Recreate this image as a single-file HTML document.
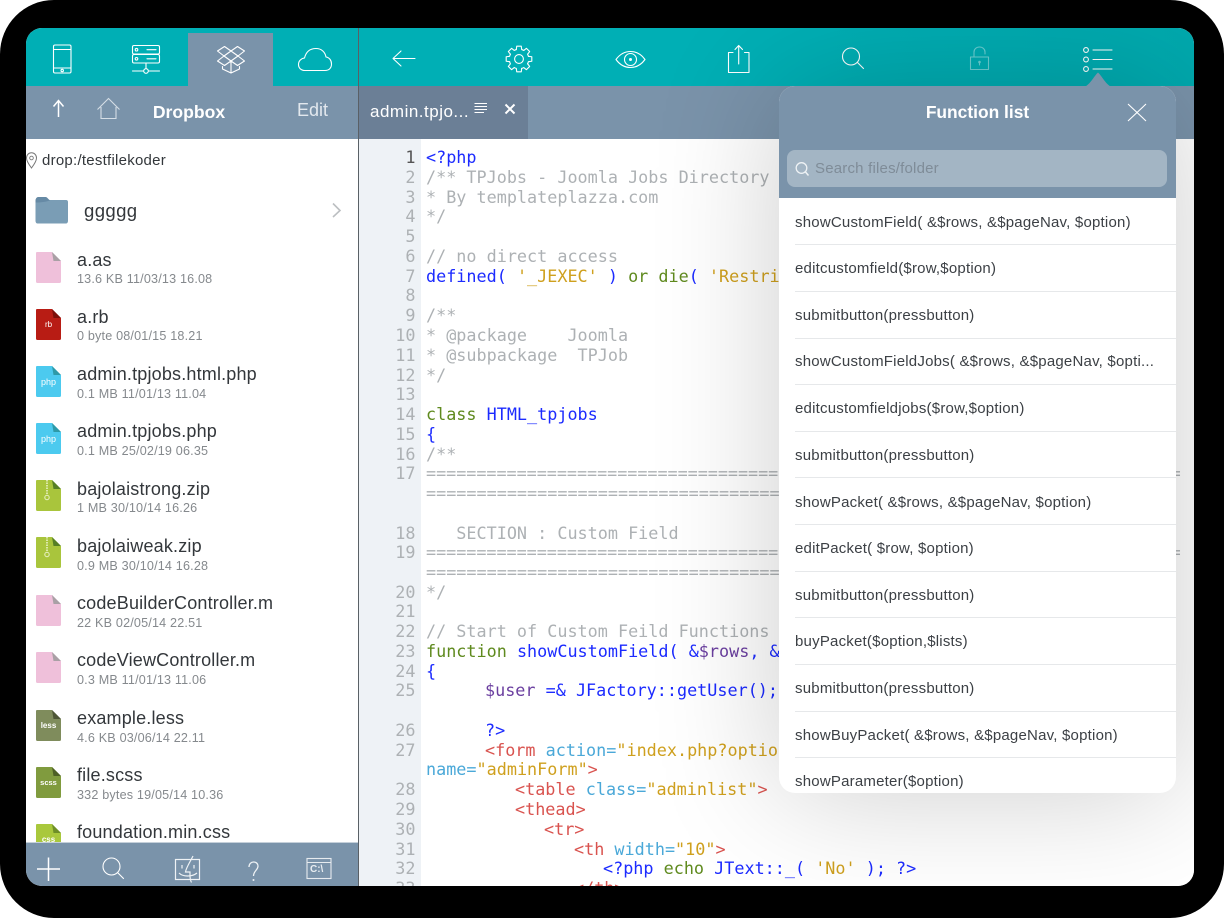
<!DOCTYPE html>
<html><head><meta charset="utf-8"><title>Koder</title>
<style>
html,body{margin:0;padding:0;width:1224px;height:918px;overflow:hidden;background:#fff}
*{box-sizing:border-box}
#frame{position:absolute;left:0;top:0;width:1224px;height:918px;background:#000;border-radius:54px}
#screen{position:absolute;left:26px;top:28px;width:1168px;height:858px;overflow:hidden;border-radius:16px;background:#fff}
#v{position:absolute;left:-26px;top:-28px;width:1224px;height:918px;font-family:"Liberation Sans",sans-serif;filter:blur(.3px)}
.a{position:absolute}
.t{position:absolute;white-space:pre;line-height:20px}
svg{position:absolute;left:0;top:0;overflow:visible}
.s{fill:none;stroke:#fff;stroke-width:1.1;stroke-linejoin:round;stroke-linecap:round}
.n{position:absolute;left:77px;color:#33373b;font-size:18px;letter-spacing:.18px;line-height:22px;white-space:pre}
.m{position:absolute;left:77px;color:#85898d;font-size:12.6px;letter-spacing:.18px;line-height:16px;white-space:pre}
.ic{position:absolute;left:36px;width:25px;height:31px;color:#fff;font-size:9px;text-align:center;line-height:31px}
.ic span{position:absolute;left:0;right:0;top:0;line-height:31px}
.l{position:absolute;font:16.8px/20px "DejaVu Sans Mono",monospace;white-space:pre;color:#adb1b4}
.g{position:absolute;left:380px;width:35.5px;text-align:right;font:16.8px/20px "DejaVu Sans Mono",monospace;color:#adb1b4}
.b{color:#1c2bff}.o{color:#5f8a1e}.y{color:#cfa01e}.p{color:#6b3fa0}.r{color:#d9534f}.h{color:#4aa8d8}.d{color:#adb1b4}
.f{position:absolute;left:795px;color:#3c4045;font-size:15px;letter-spacing:.21px;line-height:20px;white-space:pre}
.sep{position:absolute;left:795px;width:381px;height:1px;background:#e6e8ea}
</style></head><body>
<div id="frame"></div>
<div id="screen"><div id="v">

<!-- editor -->
<div class="a" style="left:359px;top:139px;width:835px;height:747px;background:#fff"></div>
<div class="a" style="left:359px;top:139px;width:62px;height:747px;background:#eef2f6"></div>

<div class="g" style="top:147px;color:#555">1</div><div class="l" style="left:426px;top:147px"><span class="b">&lt;?php</span></div>
<div class="g" style="top:167px">2</div><div class="l" style="left:426px;top:167px">/** TPJobs - Joomla Jobs Directory</div>
<div class="g" style="top:187px">3</div><div class="l" style="left:426px;top:187px">* By templateplazza.com</div>
<div class="g" style="top:206px">4</div><div class="l" style="left:426px;top:206px">*/</div>
<div class="g" style="top:226px">5</div>
<div class="g" style="top:246px">6</div><div class="l" style="left:426px;top:246px">// no direct access</div>
<div class="g" style="top:266px">7</div><div class="l" style="left:426px;top:266px"><span class="b">defined( </span><span class="y">'_JEXEC'</span><span class="b"> ) </span><span class="o">or die</span><span class="b">( </span><span class="y">'Restricted access'</span><span class="b"> );</span></div>
<div class="g" style="top:285px">8</div>
<div class="g" style="top:305px">9</div><div class="l" style="left:426px;top:305px">/**</div>
<div class="g" style="top:325px">10</div><div class="l" style="left:426px;top:325px">* @package    Joomla</div>
<div class="g" style="top:345px">11</div><div class="l" style="left:426px;top:345px">* @subpackage  TPJob</div>
<div class="g" style="top:365px">12</div><div class="l" style="left:426px;top:365px">*/</div>
<div class="g" style="top:384px">13</div>
<div class="g" style="top:404px">14</div><div class="l" style="left:426px;top:404px"><span class="o">class </span><span class="b">HTML_tpjobs</span></div>
<div class="g" style="top:424px">15</div><div class="l" style="left:426px;top:424px"><span class="b">{</span></div>
<div class="g" style="top:444px">16</div><div class="l" style="left:426px;top:444px">/**</div>
<div class="g" style="top:463px">17</div><div class="l" style="left:426px;top:463px;letter-spacing:-.04px">===========================================================================</div>
<div class="l" style="left:426px;top:483px">=====================================</div>
<div class="g" style="top:523px">18</div><div class="l" style="left:426px;top:523px">   SECTION : Custom Field</div>
<div class="g" style="top:542px">19</div><div class="l" style="left:426px;top:542px;letter-spacing:-.04px">===========================================================================</div>
<div class="l" style="left:426px;top:562px">=====================================</div>
<div class="g" style="top:582px">20</div><div class="l" style="left:426px;top:582px">*/</div>
<div class="g" style="top:601px">21</div>
<div class="g" style="top:621px">22</div><div class="l" style="left:426px;top:621px">// Start of Custom Feild Functions</div>
<div class="g" style="top:641px">23</div><div class="l" style="left:426px;top:641px"><span class="o">function </span><span class="b">showCustomField( &amp;</span><span class="p">$rows</span><span class="b">, &amp;</span><span class="p">$pageNav</span></div>
<div class="g" style="top:661px">24</div><div class="l" style="left:426px;top:661px"><span class="b">{</span></div>
<div class="g" style="top:680px">25</div><div class="l" style="left:485px;top:680px"><span class="p">$user</span><span class="b"> =&amp; JFactory::getUser();</span></div>
<div class="g" style="top:720px">26</div><div class="l" style="left:485px;top:720px"><span class="b">?&gt;</span></div>
<div class="g" style="top:740px">27</div><div class="l" style="left:485px;top:740px"><span class="r">&lt;form </span><span class="h">action=</span><span class="y">"index.php?option=com_tpjobs"</span></div>
<div class="l" style="left:426px;top:759px"><span class="h">name=</span><span class="y">"adminForm"</span><span class="r">&gt;</span></div>
<div class="g" style="top:779px">28</div><div class="l" style="left:515px;top:779px"><span class="r">&lt;table </span><span class="h">class=</span><span class="y">"adminlist"</span><span class="r">&gt;</span></div>
<div class="g" style="top:799px">29</div><div class="l" style="left:515px;top:799px"><span class="r">&lt;thead&gt;</span></div>
<div class="g" style="top:819px">30</div><div class="l" style="left:544px;top:819px"><span class="r">&lt;tr&gt;</span></div>
<div class="g" style="top:839px">31</div><div class="l" style="left:574px;top:839px"><span class="r">&lt;th </span><span class="h">width=</span><span class="y">"10"</span><span class="r">&gt;</span></div>
<div class="g" style="top:858px">32</div><div class="l" style="left:603px;top:858px"><span class="b">&lt;?php </span><span class="o">echo </span><span class="b">JText::_( </span><span class="y">'No'</span><span class="b"> ); ?&gt;</span></div>
<div class="g" style="top:878px">33</div><div class="l" style="left:574px;top:878px"><span class="r">&lt;/th&gt;</span></div>

<!-- editor top -->
<div class="a" style="left:359px;top:28px;width:835px;height:58px;background:linear-gradient(90deg,#00afb5 55%,#00a9ae 100%)"></div>
<div class="a" style="left:359px;top:86px;width:835px;height:53px;background:#7a93aa"></div>
<div class="a" style="left:359px;top:86px;width:169px;height:53px;background:#6b7f96"></div>
<div class="t" style="left:370px;top:102px;color:#fff;font-size:17px;letter-spacing:.5px">admin.tpjo...</div>
<svg width="1224" height="918"><path d="M474.500 103.500H487M474.500 106.500H487M474.500 109.500H487M474.500 112.500H484" stroke="#fff" stroke-width="1" fill="none"/><path d="M505.500 104.500L514.500 113.500M514.500 104.500L505.500 113.500" stroke="#fff" stroke-width="2" fill="none"/></svg>

<!-- toolbar icons -->
<svg width="1224" height="918">
<path class="s" d="M415 58.500H393M401 51L393 58.500L401 66"/>
<g class="s" transform="translate(519 59)">
<circle r="4.400"/>
<path d="M-2.700-9.420L-2.260-12.800H2.260L2.700-9.420A9.800 9.800 0 0 1 4.750-8.570"/>
<path transform="rotate(45)" d="M-2.700-9.420L-2.260-12.800H2.260L2.700-9.420A9.800 9.800 0 0 1 4.750-8.570"/>
<path transform="rotate(90)" d="M-2.700-9.420L-2.260-12.800H2.260L2.700-9.420A9.800 9.800 0 0 1 4.750-8.570"/>
<path transform="rotate(135)" d="M-2.700-9.420L-2.260-12.800H2.260L2.700-9.420A9.800 9.800 0 0 1 4.750-8.570"/>
<path transform="rotate(180)" d="M-2.700-9.420L-2.260-12.800H2.260L2.700-9.420A9.800 9.800 0 0 1 4.750-8.570"/>
<path transform="rotate(225)" d="M-2.700-9.420L-2.260-12.800H2.260L2.700-9.420A9.800 9.800 0 0 1 4.750-8.570"/>
<path transform="rotate(270)" d="M-2.700-9.420L-2.260-12.800H2.260L2.700-9.420A9.800 9.800 0 0 1 4.750-8.570"/>
<path transform="rotate(315)" d="M-2.700-9.420L-2.260-12.800H2.260L2.700-9.420A9.800 9.800 0 0 1 4.750-8.570"/>
</g>
<path class="s" d="M616 59.500C620 54 625 51.500 630.500 51.500C636 51.500 641 54 645 59.500C641 65 636 67.500 630.500 67.500C625 67.500 620 65 616 59.500Z"/>
<circle class="s" cx="630.500" cy="59.500" r="6"/><circle cx="630.500" cy="59.500" r="1.500" fill="#fff"/>
<path class="s" d="M733 52.500H728.500V72.500H749V52.500H744.500M738.700 64V46M735 49.500L738.700 45.500L742.500 49.500"/>
<circle class="s" cx="851" cy="56.500" r="8.500"/><path class="s" stroke-width="1.500" d="M857.500 62.500L863.500 68.500"/>
<g style="opacity:.42"><path class="s" d="M970.500 57H988.500V69.500H970.500ZM974 57V52C974 49 976.500 47 979.500 47C982.500 47 985 49 985 52V54"/><circle cx="979.500" cy="62" r="1.300" fill="#fff"/><path class="s" d="M979.500 62V65"/></g>
<circle class="s" stroke-width="1.500" cx="1086" cy="50" r="2.400"/><circle class="s" stroke-width="1.500" cx="1086" cy="59.500" r="2.400"/><circle class="s" stroke-width="1.500" cx="1086" cy="69" r="2.400"/>
<path class="s" d="M1093 50H1112M1093 59.500H1112M1093 69H1112"/>
</svg>

<!-- popover -->
<svg width="1224" height="918" style="z-index:2"><path d="M1084 87C1090 85 1094 76 1098 72.500C1102 76 1106 85 1112 87Z" fill="#7a93aa"/></svg>
<div class="a" style="left:779px;top:86px;width:397px;height:707px;background:#fff;border-radius:16px;overflow:hidden;box-shadow:0 0 180px rgba(0,0,0,.2);z-index:1">
 <div class="a" style="left:0;top:0;width:397px;height:112px;background:#7a93aa"></div>
 <div class="a" style="left:8px;top:64px;width:380px;height:37px;background:#a3b5c4;border-radius:8px"></div>
 <div class="t" style="left:0;top:16px;width:397px;text-align:center;color:#fff;font-size:17.4px;font-weight:bold">Function list</div>
 <div class="t" style="left:36px;top:73px;color:#7f8c98;font-size:15px;letter-spacing:.2px">Search files/folder</div>
</div>
<div class="a" style="left:0;top:0;width:1224px;height:793px;overflow:hidden;z-index:3">
<svg width="1224" height="918">
<path d="M1128 104L1146 121M1146 104L1128 121" stroke="#fff" stroke-width="1.100" fill="none"/>
<circle cx="801.500" cy="168" r="5.300" fill="none" stroke="#eef2f5" stroke-width="1.300"/><path d="M805.500 172L808.500 175.500" stroke="#eef2f5" stroke-width="1.500"/>
</svg>
<div class="f" style="top:213px">showCustomField( &amp;$rows, &amp;$pageNav, $option)</div><div class="sep" style="top:244px"></div>
<div class="f" style="top:259px">editcustomfield($row,$option)</div><div class="sep" style="top:291px"></div>
<div class="f" style="top:306px">submitbutton(pressbutton)</div><div class="sep" style="top:338px"></div>
<div class="f" style="top:352px">showCustomFieldJobs( &amp;$rows, &amp;$pageNav, $opti...</div><div class="sep" style="top:384px"></div>
<div class="f" style="top:399px">editcustomfieldjobs($row,$option)</div><div class="sep" style="top:431px"></div>
<div class="f" style="top:446px">submitbutton(pressbutton)</div><div class="sep" style="top:477px"></div>
<div class="f" style="top:493px">showPacket( &amp;$rows, &amp;$pageNav, $option)</div><div class="sep" style="top:524px"></div>
<div class="f" style="top:539px">editPacket( $row, $option)</div><div class="sep" style="top:571px"></div>
<div class="f" style="top:586px">submitbutton(pressbutton)</div><div class="sep" style="top:617px"></div>
<div class="f" style="top:632px">buyPacket($option,$lists)</div><div class="sep" style="top:664px"></div>
<div class="f" style="top:679px">submitbutton(pressbutton)</div><div class="sep" style="top:711px"></div>
<div class="f" style="top:726px">showBuyPacket( &amp;$rows, &amp;$pageNav, $option)</div><div class="sep" style="top:757px"></div>
<div class="f" style="top:772px">showParameter($option)</div>
</div>

<!-- sidebar -->
<div class="a" style="left:26px;top:28px;width:332px;height:858px;background:#fff;z-index:4"></div>
<div class="a" style="left:358px;top:28px;width:1px;height:858px;background:#5a6066;z-index:4"></div>
<div class="a" style="left:26px;top:28px;width:332px;height:58px;background:#00afb5;z-index:4"></div>
<div class="a" style="left:188px;top:33px;width:85px;height:53px;background:#7a93aa;z-index:4"></div>
<div class="a" style="left:26px;top:86px;width:332px;height:53px;background:#7a93aa;z-index:4"></div>
<div id="side" class="a" style="left:0;top:0;width:358px;height:918px;z-index:5">
<svg width="358" height="918">
<rect class="s" x="53.500" y="45" width="17.500" height="28" rx="1.500"/><path class="s" d="M53.500 49.500H71M53.500 68H71"/><circle class="s" stroke-width=".9" cx="62.200" cy="70.500" r="1.200"/>
<rect class="s" x="132.500" y="45.500" width="27" height="8.500" rx="1.500"/><rect class="s" x="132.500" y="54.500" width="27" height="8.500" rx="1.500"/>
<circle class="s" cx="136.500" cy="49.700" r="1.300"/><circle class="s" cx="136.500" cy="58.800" r="1.300"/><path class="s" stroke-width="1" d="M147 49.700H156M147 58.800H156"/>
<path class="s" d="M146 63V68.500M132.500 71H143.500M148.500 71H159.500"/><circle class="s" cx="146" cy="71" r="2.300"/>
<path class="s" d="M231 51L224.500 46.500L217.500 51L224 56L217.500 61L224.500 65.500L231 61L237.500 65.500L244.500 61L238 56L244.500 51L237.500 46.500ZM224 56L231 51L238 56L231 61ZM222.500 66.500V69L231 73L239.500 69V66.500M231 61V73"/>
<path class="s" d="M305 70.500C301 70.500 298.500 68 298.500 64.500C298.500 61 301 58.500 304.500 58C306 52 310 48.500 316 48.500C321.500 48.500 325 52 326 57C329.500 57.500 331.500 60.500 331.500 64C331.500 68 329 70.500 325 70.500Z"/>
<path d="M58.500 117V101M53.500 106.500L58.500 100.500L63.500 106.500" fill="none" stroke="#fff" stroke-width="1.500"/>
<path d="M97.500 109.500L108.500 98.500L119.500 109.500M101 107V118.500H116V107" fill="none" stroke="#d5dee6" stroke-width="1.100"/>
<path d="M31.500 168C28.500 164 26.500 161 26.500 158C26.500 155 28.700 152.800 31.500 152.800C34.300 152.800 36.500 155 36.500 158C36.500 161 34.500 164 31.500 168Z" fill="none" stroke="#777" stroke-width="1"/><circle cx="31.500" cy="158" r="1.800" fill="none" stroke="#777" stroke-width=".9"/>
<path d="M35.500 201C35.500 199 36.500 197 38.500 197H45.500C47 197 48 199 49.500 200H66C67.500 200 68 201 68 202V221C68 222.500 67 223.500 66 223.500H37.500C36.500 223.500 35.500 222.500 35.500 221Z" fill="#7a9db5"/>
<path d="M35.500 201C35.500 199 36.500 197 38.500 197H45.500C47 197 48 199 50 200.500C47 201.500 42 202.500 35.500 202.500Z" fill="#668aa5"/>
<path d="M333 203.500L340 210.500L333 217" fill="none" stroke="#bcbfc2" stroke-width="1.600"/>
</svg>
<div class="t" style="left:0;top:102px;width:378px;text-align:center;color:#fff;font-size:17.6px;font-weight:bold">Dropbox</div>
<div class="t" style="left:297px;top:100px;color:#e2e8ee;font-size:18px">Edit</div>
<div class="t" style="left:42px;top:150.500px;color:#33373b;font-size:15px;letter-spacing:.25px">drop:/testfilekoder</div>
<div class="t" style="left:84px;top:201px;color:#33373b;font-size:18.600px;letter-spacing:.35px">ggggg</div>

<div class="n" style="top:249px">a.as</div><div class="m" style="top:271px">13.6 KB 11/03/13 16.08</div>
<div class="n" style="top:306px">a.rb</div><div class="m" style="top:328px">0 byte 08/01/15 18.21</div>
<div class="n" style="top:363px">admin.tpjobs.html.php</div><div class="m" style="top:386px">0.1 MB 11/01/13 11.04</div>
<div class="n" style="top:420px">admin.tpjobs.php</div><div class="m" style="top:443px">0.1 MB 25/02/19 06.35</div>
<div class="n" style="top:478px">bajolaistrong.zip</div><div class="m" style="top:500px">1 MB 30/10/14 16.26</div>
<div class="n" style="top:535px">bajolaiweak.zip</div><div class="m" style="top:558px">0.9 MB 30/10/14 16.28</div>
<div class="n" style="top:592px">codeBuilderController.m</div><div class="m" style="top:615px">22 KB 02/05/14 22.51</div>
<div class="n" style="top:649px">codeViewController.m</div><div class="m" style="top:672px">0.3 MB 11/01/13 11.06</div>
<div class="n" style="top:707px">example.less</div><div class="m" style="top:730px">4.6 KB 03/06/14 22.11</div>
<div class="n" style="top:764px">file.scss</div><div class="m" style="top:787px">332 bytes 19/05/14 10.36</div>
<div class="n" style="top:821px">foundation.min.css</div>

<svg width="358" height="918">
<g transform="translate(36 252)"><path d="M1 0H16L25 9V29.500a1.500 1.500 0 0 1-1.500 1.500H1.500a1.500 1.500 0 0 1-1.500-1.500V1a1 1 0 0 1 1-1Z" fill="#efc0da"/><path d="M16 0L25 9H17.500Z" fill="#a9a0a5"/></g>
<g transform="translate(36 309)"><path d="M1 0H16L25 9V29.500a1.500 1.500 0 0 1-1.500 1.500H1.500a1.500 1.500 0 0 1-1.500-1.500V1a1 1 0 0 1 1-1Z" fill="#b81c14"/><path d="M16 0L25 9H17.500Z" fill="#7c0f0a"/></g>
<g transform="translate(36 366)"><path d="M1 0H16L25 9V29.500a1.500 1.500 0 0 1-1.500 1.500H1.500a1.500 1.500 0 0 1-1.500-1.500V1a1 1 0 0 1 1-1Z" fill="#4ccaef"/><path d="M16 0L25 9H17.500Z" fill="#2e9aa8"/></g>
<g transform="translate(36 423)"><path d="M1 0H16L25 9V29.500a1.500 1.500 0 0 1-1.500 1.500H1.500a1.500 1.500 0 0 1-1.500-1.500V1a1 1 0 0 1 1-1Z" fill="#4ccaef"/><path d="M16 0L25 9H17.500Z" fill="#2e9aa8"/></g>
<g transform="translate(36 480)"><path d="M1 0H16L25 9V29.500a1.500 1.500 0 0 1-1.500 1.500H1.500a1.500 1.500 0 0 1-1.500-1.500V1a1 1 0 0 1 1-1Z" fill="#a9c53c"/><path d="M16 0L25 9H17.500Z" fill="#567f26"/><path d="M11 0V14" stroke="#e9f1c6" stroke-width="1.600" stroke-dasharray="1.500 1"/><circle cx="11" cy="17.500" r="2.200" fill="none" stroke="#e9f1c6" stroke-width="1"/></g>
<g transform="translate(36 537)"><path d="M1 0H16L25 9V29.500a1.500 1.500 0 0 1-1.500 1.500H1.500a1.500 1.500 0 0 1-1.500-1.500V1a1 1 0 0 1 1-1Z" fill="#a9c53c"/><path d="M16 0L25 9H17.500Z" fill="#567f26"/><path d="M11 0V14" stroke="#e9f1c6" stroke-width="1.600" stroke-dasharray="1.500 1"/><circle cx="11" cy="17.500" r="2.200" fill="none" stroke="#e9f1c6" stroke-width="1"/></g>
<g transform="translate(36 595)"><path d="M1 0H16L25 9V29.500a1.500 1.500 0 0 1-1.500 1.500H1.500a1.500 1.500 0 0 1-1.500-1.500V1a1 1 0 0 1 1-1Z" fill="#efc0da"/><path d="M16 0L25 9H17.500Z" fill="#a9a0a5"/></g>
<g transform="translate(36 652)"><path d="M1 0H16L25 9V29.500a1.500 1.500 0 0 1-1.500 1.500H1.500a1.500 1.500 0 0 1-1.500-1.500V1a1 1 0 0 1 1-1Z" fill="#efc0da"/><path d="M16 0L25 9H17.500Z" fill="#a9a0a5"/></g>
<g transform="translate(36 710)"><path d="M1 0H16L25 9V29.500a1.500 1.500 0 0 1-1.500 1.500H1.500a1.500 1.500 0 0 1-1.500-1.500V1a1 1 0 0 1 1-1Z" fill="#7f8c5c"/><path d="M16 0L25 9H17.500Z" fill="#4d5636"/></g>
<g transform="translate(36 767)"><path d="M1 0H16L25 9V29.500a1.500 1.500 0 0 1-1.500 1.500H1.500a1.500 1.500 0 0 1-1.500-1.500V1a1 1 0 0 1 1-1Z" fill="#809b3e"/><path d="M16 0L25 9H17.500Z" fill="#4d5f25"/></g>
<g transform="translate(36 824)"><path d="M1 0H16L25 9V29.500a1.500 1.500 0 0 1-1.500 1.500H1.500a1.500 1.500 0 0 1-1.500-1.500V1a1 1 0 0 1 1-1Z" fill="#a9c83c"/><path d="M16 0L25 9H17.500Z" fill="#6e8f28"/></g>
</svg>
<div class="ic" style="top:309px;font-size:8px"><span>rb</span></div>
<div class="ic" style="top:367px"><span>php</span></div>
<div class="ic" style="top:424px"><span>php</span></div>
<div class="ic" style="top:710px;font-weight:bold;font-size:8px"><span>less</span></div>
<div class="ic" style="top:767px;font-weight:bold;font-size:7.500px"><span>scss</span></div>
<div class="ic" style="top:824px;font-weight:bold;font-size:8px"><span>css</span></div>

<div class="a" style="left:26px;top:842px;width:332px;height:44px;background:#7a93aa;border-top:1px solid #c5d0da"></div>
<svg width="358" height="918">
<path d="M37 869H60M48.500 857.500V881" stroke="#fff" stroke-width="1.500" fill="none"/>
<circle class="s" cx="111.500" cy="866.500" r="8.500"/><path class="s" stroke-width="1.500" d="M118 873L123.500 878.500"/>
<g stroke="#eef2f5" fill="none" stroke-width="1.200"><rect x="175.500" y="859.500" width="24" height="20"/><path d="M193 856C190 862 186 868 185.500 872H190C190 876 189.500 879 191.500 882.500"/><path d="M182 865V868.500M194 865V868.500M179 873C183 877 192 877 197 873"/></g>
<path d="M249 867C249 863.500 251.500 862 253.500 862C256.500 862 258 864 258 866C258 870 253.500 871 253.500 876" stroke="#eef2f5" stroke-width="1.300" fill="none"/><circle cx="253.500" cy="880" r="1" fill="#eef2f5"/>
<rect x="307" y="858.500" width="24" height="20" fill="none" stroke="#e6ebef" stroke-width="1.100"/><path d="M307 862.500H331" stroke="#e6ebef" stroke-width="1.100"/>
</svg>
<div class="t" style="left:310px;top:859.500px;color:#e8edf1;font-size:10px;font-weight:bold">C:\</div>
</div>
</div></div>
</body></html>
